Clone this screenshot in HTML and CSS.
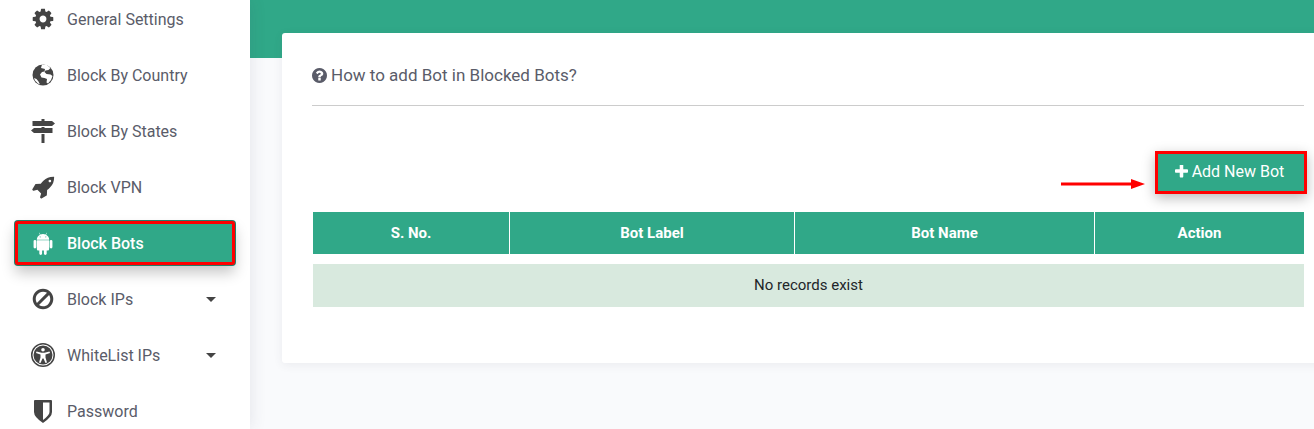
FILE: index.html
```html
<!DOCTYPE html>
<html lang="en">
<head>
    <meta charset="UTF-8">
    <meta name="viewport" content="width=device-width, initial-scale=1.0">
    <title>Block Bots</title>
    <link rel="stylesheet" href="styles.css">
</head>
<body>
    <div class="page">
        <!-- Sidebar -->
        <aside class="sidebar">
            <nav class="side-nav">
                <a class="nav-item">
                    <svg class="nav-icon" viewBox="0 0 1792 1792"><path d="M1152 896q0-106-75-181t-181-75-181 75-75 181 75 181 181 75 181-75 75-181zm512-109v222q0 12-8 23t-20 13l-185 28q-19 54-39 91 35 50 107 138 10 12 10 25t-9 23q-27 37-99 108t-94 71q-12 0-26-9l-138-108q-44 23-91 38-16 136-29 186-7 28-36 28h-222q-14 0-24.500-8.500t-11.500-21.500l-28-184q-49-16-90-37l-141 107q-10 9-25 9-14 0-25-11-126-114-165-168-7-10-7-23 0-12 8-23 15-21 51-66.500t54-70.500q-27-50-41-99l-183-27q-13-2-21-12.500t-8-23.500v-222q0-12 8-23t19-13l186-28q14-46 39-92-40-57-107-138-10-12-10-24 0-10 9-23 26-36 98.500-107.500t94.500-71.500q13 0 26 10l138 107q44-23 91-38 16-136 29-186 7-28 36-28h222q14 0 24.500 8.500t11.500 21.500l28 184q49 16 90 37l142-107q9-9 24-9 13 0 25 10 129 119 165 170 7 8 7 22 0 12-8 23-15 21-51 66.500t-54 70.500q26 50 41 98l183 28q13 2 21 12.500t8 23.500z"/></svg>
                    <span>General Settings</span>
                </a>
                <a class="nav-item">
                    <svg class="nav-icon" viewBox="0 0 24 24"><circle cx="12" cy="12" r="10.500"/><path class="cut" d="M11 1.500 16 2l3.500 3-2 2-3 .5-1 1.500 2 2 4 .5 2 1.500-1.500 4-3 3.500-1.500-1 .5-3.500-2.500-1-3-.5-1.500-3 2-2.500 2.500-.5.5-2.500L10 5zM3 15l2.500 1 2 2.500L9 21.500l-2-1-3-3z"/></svg>
                    <span>Block By Country</span>
                </a>
                <a class="nav-item">
                    <svg class="nav-icon" viewBox="0 0 24 24"><path d="M10.500 0h3v2H21l3 2.500L21 7H1.500V2h9zM3 9h7.500V8h3v1h8v5H3L0 11.500zM10.500 15h3v9h-3z"/></svg>
                    <span>Block By States</span>
                </a>
                <a class="nav-item">
                    <svg class="nav-icon" viewBox="0 0 1792 1792"><path d="M1504 448q0-40-28-68t-68-28-68 28-28 68 28 68 68 28 68-28 28-68zm224-288q0 249-75.500 430.500t-253.500 360.500q-81 80-195 176l-20 379q-2 16-16 26l-384 224q-7 4-16 4-12 0-23-9l-64-64q-13-14-8-32l85-276-281-281-276 85q-3 1-9 1-14 0-23-9l-64-64q-17-19-5-39l224-384q10-14 26-16l379-20q96-114 176-195 188-187 358-258t431-71q14 0 24 9.500t10 22.500z"/></svg>
                    <span>Block VPN</span>
                </a>
                <a class="nav-item active">
                    <svg class="nav-icon" viewBox="0 0 1408 1792"><path d="M493 483q16 0 27.500-11.500t11.500-27.500-11.500-27.500-27.500-11.500-27 11.500-11 27.500 11 27.500 27 11.500zm422 0q16 0 27-11.500t11-27.500-11-27.500-27-11.500-27.500 11.500-11.500 27.500 11.500 27.500 27.500 11.500zm-812 184q42 0 72 30t30 72v430q0 43-29.500 73t-72.500 30-73-30-30-73v-430q0-42 30-72t73-30zm1060 19v666q0 46-32 78t-77 32h-75v227q0 43-30 73t-73 30-73-30-30-73v-227h-138v227q0 43-30 73t-73 30q-42 0-72-30t-30-73l-1-227h-74q-46 0-78-32t-32-78v-666h918zm-232-405q107 55 171 153.500t64 215.500h-925q0-117 64-215.500t172-153.500l-71-131q-7-13 5-20 13-6 20 6l72 132q95-42 201-42t201 42l72-132q7-12 20-6 12 7 5 20zm477 488v430q0 43-30 73t-73 30q-42 0-72-30t-30-73v-430q0-43 30-72.500t72-29.500q43 0 73 29.500t30 72.500z"/></svg>
                    <span>Block Bots</span>
                </a>
                <a class="nav-item">
                    <svg class="nav-icon" viewBox="0 0 1792 1792"><path d="M1440 893q0-161-87-295l-754 753q137 89 297 89 111 0 211.500-43.500t173.500-116.500 116-174.500 43-212.500zm-999 299l755-754q-135-91-300-91-148 0-273 73t-198 199-73 274q0 162 89 299zm1223-299q0 157-61 300t-163.500 246-245 164-298.500 61-298.500-61-245-164-163.500-246-61-300 61-299.500 163.500-245.500 245-164 298.500-61 298.500 61 245 164 163.500 245.500 61 299.500z"/></svg>
                    <span>Block IPs</span>
                    <i class="caret"></i>
                </a>
                <a class="nav-item">
                    <svg class="nav-icon" viewBox="0 0 24 24"><path fill-rule="evenodd" d="M12 0a12 12 0 1 1 0 24 12 12 0 0 1 0-24zm0 1.500a10.500 10.500 0 1 0 0 21 10.500 10.500 0 0 0 0-21zM12 2.500a9.500 9.500 0 1 1 0 19 9.500 9.500 0 0 1 0-19zM12 5a1.800 1.800 0 1 0 0 3.600A1.800 1.800 0 0 0 12 5zM5.500 8.500 5 10l4.500 1.500v3L8 19.500l1.500.5 2-4.500h1l2 4.500 1.500-.5-1.500-5v-3L19 10l-.5-1.500-5 1.300h-3z"/></svg>
                    <span>WhiteList IPs</span>
                    <i class="caret"></i>
                </a>
                <a class="nav-item">
                    <svg class="nav-icon" viewBox="0 0 24 24"><path fill-rule="evenodd" d="M4 1h16q1 0 1 1v11q0 5-9 11Q3 18 3 13V2q0-1 1-1zm8 2.500V21q6.500-5 6.500-8V3.500z"/></svg>
                    <span>Password</span>
                </a>
            </nav>
        </aside>

        <!-- Main content -->
        <main class="content">
            <div class="banner"></div>
            <section class="card">
                <h2 class="help-title">
                    <svg class="help-icon" viewBox="128 128 1536 1536"><path d="M1024 1376v-192q0-14-9-23t-23-9h-192q-14 0-23 9t-9 23v192q0 14 9 23t23 9h192q14 0 23-9t9-23zm256-672q0-88-55.500-163t-138.500-116-170-41q-243 0-371 213-15 24 8 42l132 100q7 6 19 6 16 0 25-12 53-68 86-92 34-24 86-24 48 0 85.500 26t37.500 59q0 38-20 61t-68 45q-63 28-115.500 86.500t-52.500 125.500v36q0 14 9 23t23 9h192q14 0 23-9t9-23q0-19 21.500-49.500t54.500-49.500q32-18 49-28.500t46-35 44.500-48 28-60.500 12.500-81zm384 192q0 209-103 385.500t-279.500 279.500-385.500 103-385.500-103-279.500-279.500-103-385.500 103-385.500 279.500-279.500 385.500-103 385.500 103 279.500 279.500 103 385.500z"/></svg>
                    How to add Bot in Blocked Bots?
                </h2>
                <hr class="divider">
                <div class="toolbar">
                    <svg class="arrow" viewBox="0 0 84 10"><path d="M0 3.500h70V0l14 5-14 5V6.500H0z"/></svg>
                    <button class="add-btn" type="button">
                        <svg class="plus-icon" viewBox="192 192 1408 1408"><path d="M1600 736v192q0 40-28 68t-68 28h-416v416q0 40-28 68t-68 28h-192q-40 0-68-28t-28-68v-416h-416q-40 0-68-28t-28-68v-192q0-40 28-68t68-28h416v-416q0-40 28-68t68-28h192q40 0 68 28t28 68v416h416q40 0 68 28t28 68z"/></svg>
                        Add New Bot
                    </button>
                </div>
                <table class="bots-table">
                    <colgroup>
                        <col class="col-sno">
                        <col class="col-label">
                        <col class="col-name">
                        <col>
                    </colgroup>
                    <thead>
                        <tr>
                            <th>S. No.</th>
                            <th>Bot Label</th>
                            <th>Bot Name</th>
                            <th>Action</th>
                        </tr>
                    </thead>
                    <tbody>
                        <tr>
                            <td colspan="4">No records exist</td>
                        </tr>
                    </tbody>
                </table>
            </section>
        </main>
    </div>
</body>
</html>
```

FILE: styles.css
```css
:root {
    --green: #30a888;
    --green-dark: #23806a;
    --row-bg: #d8e9de;
    --page-bg: #f9fafc;
    --text: #5a5c69;
    --icon: #444;
    --red: #f00;
}

* {
    box-sizing: border-box;
}

body {
    margin: 0;
    font-family: Roboto, Arial, sans-serif;
    background-color: var(--page-bg);
    color: var(--text);
}

.page {
    display: flex;
    height: 429px;
    overflow: hidden;
}

/* Sidebar */
.sidebar {
    width: 250px;
    flex-shrink: 0;
    background-color: #fff;
    box-shadow: 0 0 16px rgba(60, 60, 90, 0.12);
    position: relative;
    z-index: 1;
}

.side-nav {
    display: flex;
    flex-direction: column;
    gap: 12px;
    margin-top: -3px;
    padding: 0 15px;
}

.nav-item {
    display: flex;
    align-items: center;
    height: 44px;
    padding: 0 19px 0 16px;
    font-size: 16px;
    border-radius: 3px;
}

.nav-icon {
    width: 24px;
    height: 24px;
    margin-right: 12px;
    fill: var(--icon);
    flex-shrink: 0;
}

.nav-icon .cut {
    fill: #fff;
}

.nav-item span {
    flex-grow: 1;
}

.nav-item.active {
    background-color: var(--green);
    color: #fff;
    font-weight: 500;
    border: 3px solid var(--red);
    padding: 0 15px 0 13px;
    box-shadow: 0 0 0 1px var(--green-dark), 0 8px 14px rgba(0, 0, 0, 0.22);
}

.nav-item.active .nav-icon {
    fill: #fff;
}

.caret {
    width: 0;
    height: 0;
    border-left: 5px solid transparent;
    border-right: 5px solid transparent;
    border-top: 5px solid var(--icon);
}

/* Main */
.content {
    flex-grow: 1;
    min-width: 0;
    overflow: hidden;
}

.banner {
    height: 58px;
    background-color: var(--green);
}

.card {
    width: 1052px;
    height: 330px;
    margin: -25px 0 0 32px;
    padding: 30px;
    background-color: #fff;
    border-radius: 3px;
    box-shadow: 0 2px 10px rgba(60, 60, 90, 0.08);
    position: relative;
}

.help-title {
    display: flex;
    align-items: center;
    gap: 4px;
    margin: 0;
    height: 24px;
    font-size: 17px;
    font-weight: 400;
}

.help-icon {
    width: 15px;
    height: 15px;
    fill: var(--text);
}

.divider {
    margin: 18px 0 0;
    border: 0;
    border-top: 1px solid #ccc;
}

.toolbar {
    display: flex;
    justify-content: flex-end;
    margin: 45px -3px 0 0;
}

.arrow {
    width: 84px;
    height: 10px;
    margin: 28px 10px 0 0;
    fill: var(--red);
}

.add-btn {
    display: flex;
    align-items: center;
    justify-content: center;
    gap: 4px;
    width: 152px;
    height: 43px;
    padding: 0 3px 2px 0;
    font-family: inherit;
    font-size: 16px;
    color: #fff;
    background-color: var(--green);
    border: 3px solid var(--red);
    box-shadow: 0 4px 12px rgba(0, 0, 0, 0.28);
}

.plus-icon {
    width: 13px;
    height: 13px;
    fill: #fff;
}

.bots-table {
    width: 991px;
    margin: 18px 0 0 1px;
    border-collapse: separate;
    border-spacing: 0;
    table-layout: fixed;
    font-size: 15px;
}

.col-sno {
    width: 197px;
}

.col-label {
    width: 285px;
}

.col-name {
    width: 300px;
}

.bots-table th {
    height: 42px;
    padding: 0;
    color: #fff;
    font-size: 15px;
    font-weight: 700;
    background-color: var(--green);
    border-right: 1px solid #fff;
}

.bots-table th:last-child {
    border-right: 0;
}

.bots-table td {
    height: 53px;
    padding: 0 0 2px;
    text-align: center;
    color: #212529;
    background-color: var(--row-bg);
    background-clip: padding-box;
    border-top: 10px solid transparent;
}
```
